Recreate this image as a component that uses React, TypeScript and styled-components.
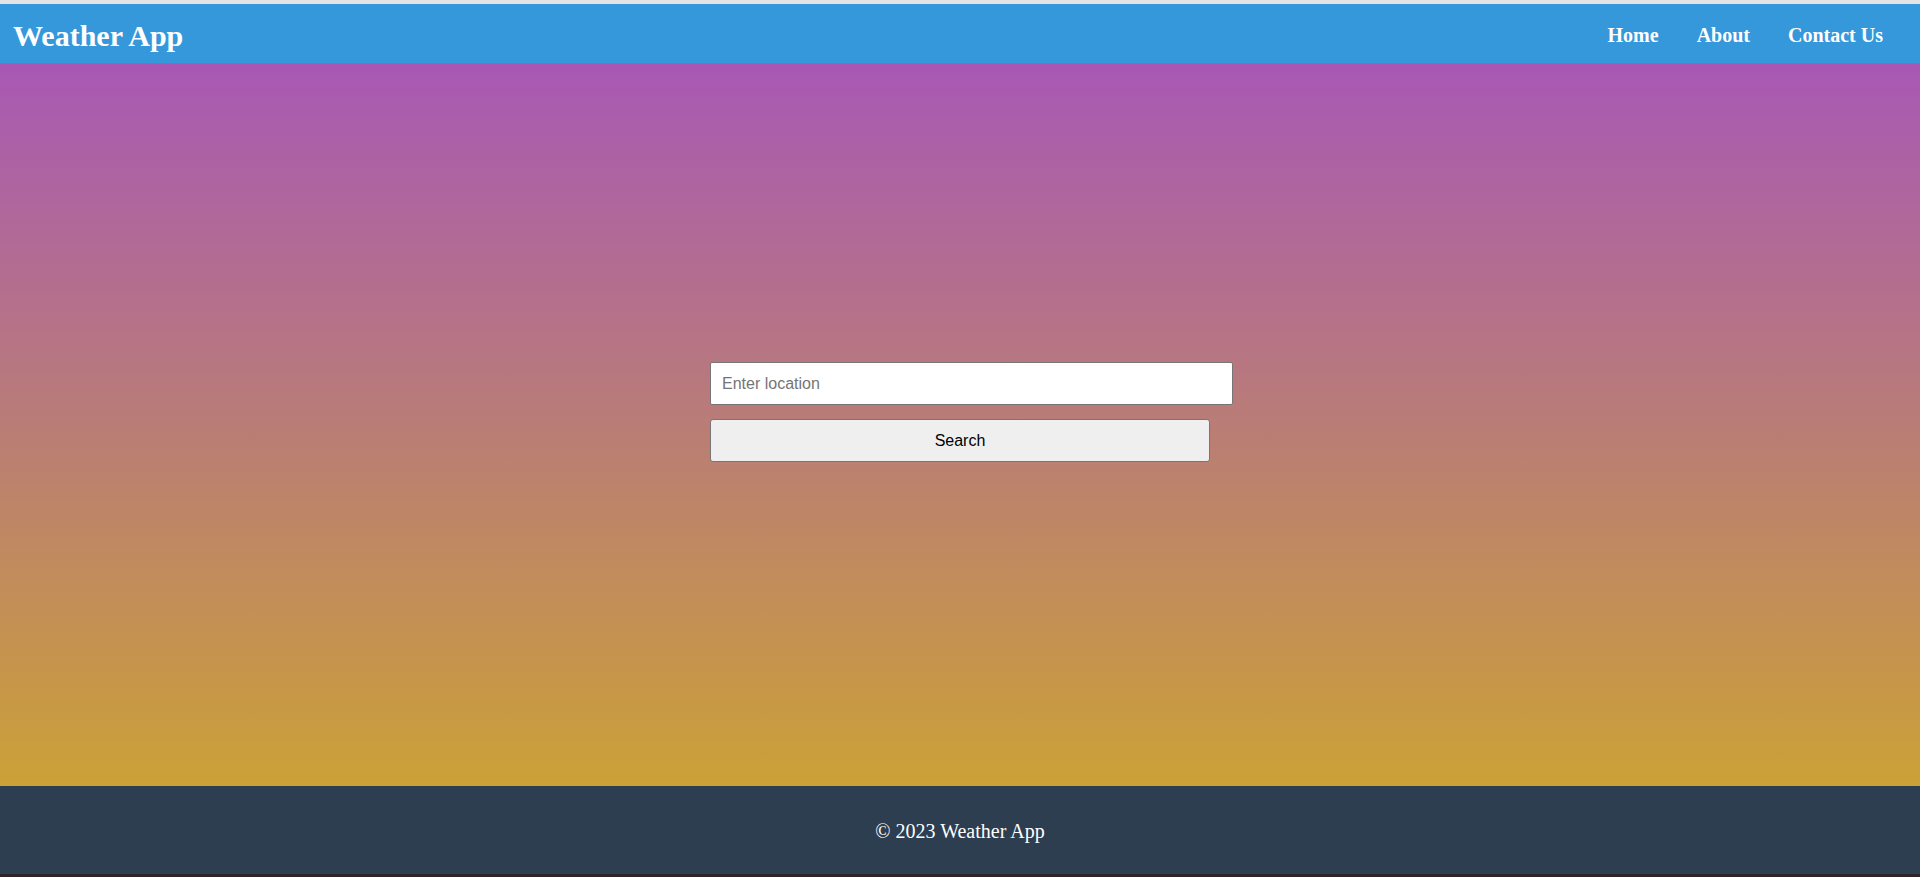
import styled, { createGlobalStyle } from "styled-components";

const GlobalStyle = createGlobalStyle`
  html, body {
    margin: 0;
    padding: 0;
  }
  body {
    background: #2b2528;
    font-family: "Liberation Serif", "Times New Roman", serif;
  }
`;

const Page = styled.div`
  display: flex;
  flex-direction: column;
  height: 877px;
  box-sizing: border-box;
  border-top: 4px solid #e4e4e4;
  border-bottom: 3px solid #2b2528;
`;

const Header = styled.header`
  height: 59px;
  flex-shrink: 0;
  box-sizing: border-box;
  padding: 4px 37px 0 13px;
  display: flex;
  align-items: center;
  justify-content: space-between;
  background: #3598db;
  color: #ffffff;
`;

const Title = styled.h1`
  margin: 0;
  font-size: 30px;
  font-weight: 700;
`;

const Nav = styled.nav`
  display: flex;
  gap: 38px;
`;

const NavLink = styled.a`
  color: #ffffff;
  font-size: 20px;
  font-weight: 700;
  text-decoration: none;
  cursor: pointer;
`;

const Main = styled.main`
  flex: 1;
  display: flex;
  align-items: center;
  justify-content: center;
  padding-bottom: 25px;
  background: linear-gradient(to bottom, #a858b5, #cca137);
`;

const SearchForm = styled.form`
  width: 500px;
  display: flex;
  flex-direction: column;
  align-items: flex-start;
  gap: 14px;
`;

const LocationInput = styled.input`
  width: 100%;
  height: 21px;
  padding: 10px 10px 10px 11px;
  border: 1px solid #767676;
  border-radius: 2px;
  background: #ffffff;
  font-family: "Liberation Sans", Arial, sans-serif;
  font-size: 16px;
  color: #000000;
  &::placeholder {
    color: #757575;
  }
`;

const SearchButton = styled.button`
  width: 100%;
  height: 43px;
  border: 1px solid #767676;
  border-radius: 3px;
  background: #efefef;
  font-family: "Liberation Sans", Arial, sans-serif;
  font-size: 16px;
  color: #000000;
  cursor: pointer;
`;

const Footer = styled.footer`
  height: 88px;
  flex-shrink: 0;
  display: flex;
  align-items: center;
  justify-content: center;
  padding-top: 2px;
  box-sizing: border-box;
  background: #2c3e50;
  color: #ffffff;
  font-size: 20px;
`;

export default function App() {
  return (
    <>
      <GlobalStyle />
      <Page>
        <Header>
          <Title>Weather App</Title>
          <Nav>
            <NavLink>Home</NavLink>
            <NavLink>About</NavLink>
            <NavLink>Contact Us</NavLink>
          </Nav>
        </Header>
        <Main>
          <SearchForm onSubmit={(e) => e.preventDefault()}>
            <LocationInput type="text" placeholder="Enter location" />
            <SearchButton type="submit">Search</SearchButton>
          </SearchForm>
        </Main>
        <Footer>© 2023 Weather App</Footer>
      </Page>
    </>
  );
}
